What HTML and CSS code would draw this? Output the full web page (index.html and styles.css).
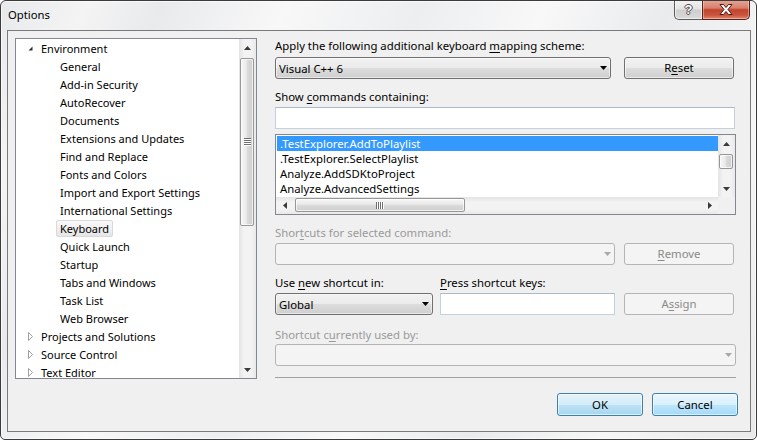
FILE: index.html
```html
<!DOCTYPE html>
<html>
  <head>
    <meta charset="utf-8" />
    <title>Options</title>
    <meta name="viewport" content="width=device-width, initial-scale=1.0" />
    <link rel="stylesheet" href="styles.css">
  </head>
  <body>
    <div class="window">
      <div class="titleBar">
        <span class="titleText">Options</span>
        <div class="captionButtons">
          <div class="helpButton">?</div>
          <div class="closeButton">
            <svg width="14" height="11" viewBox="0 0 14 11">
              <path d="M1 0.5 H4.5 L7 3.5 L9.5 0.5 H13 L9 5.5 L13 10.5 H9.5 L7 7.5 L4.5 10.5 H1 L5 5.5 Z" fill="#ffffff" stroke="#4a1a12" stroke-width="1" stroke-linejoin="round" />
            </svg>
          </div>
        </div>
      </div>
      <div class="client">
        <div class="mainRow">
          <div class="tree">
            <div class="treeItems">
              <div class="treeRow rootRow">
                <span class="expander"><svg width="5" height="5" viewBox="0 0 5 5"><path d="M4.5 0.5 V4.5 H0.5 Z" fill="#303030" /></svg></span>
                <span class="treeLabel">Environment</span>
              </div>
              <div class="treeRow"><span class="treeLabel">General</span></div>
              <div class="treeRow"><span class="treeLabel">Add-in Security</span></div>
              <div class="treeRow"><span class="treeLabel">AutoRecover</span></div>
              <div class="treeRow"><span class="treeLabel">Documents</span></div>
              <div class="treeRow"><span class="treeLabel">Extensions and Updates</span></div>
              <div class="treeRow"><span class="treeLabel">Find and Replace</span></div>
              <div class="treeRow"><span class="treeLabel">Fonts and Colors</span></div>
              <div class="treeRow"><span class="treeLabel">Import and Export Settings</span></div>
              <div class="treeRow"><span class="treeLabel">International Settings</span></div>
              <div class="treeRow"><span class="treeLabel selected">Keyboard</span></div>
              <div class="treeRow"><span class="treeLabel">Quick Launch</span></div>
              <div class="treeRow"><span class="treeLabel">Startup</span></div>
              <div class="treeRow"><span class="treeLabel">Tabs and Windows</span></div>
              <div class="treeRow"><span class="treeLabel">Task List</span></div>
              <div class="treeRow"><span class="treeLabel">Web Browser</span></div>
              <div class="treeRow rootRow">
                <span class="expander"><svg width="6" height="9" viewBox="0 0 6 9"><path d="M0.5 0.5 L4.5 4.5 L0.5 8.5 Z" fill="none" stroke="#a0a0a0" /></svg></span>
                <span class="treeLabel">Projects and Solutions</span>
              </div>
              <div class="treeRow rootRow">
                <span class="expander"><svg width="6" height="9" viewBox="0 0 6 9"><path d="M0.5 0.5 L4.5 4.5 L0.5 8.5 Z" fill="none" stroke="#a0a0a0" /></svg></span>
                <span class="treeLabel">Source Control</span>
              </div>
              <div class="treeRow rootRow">
                <span class="expander"><svg width="6" height="9" viewBox="0 0 6 9"><path d="M0.5 0.5 L4.5 4.5 L0.5 8.5 Z" fill="none" stroke="#a0a0a0" /></svg></span>
                <span class="treeLabel">Text Editor</span>
              </div>
            </div>
            <div class="vScroll">
              <div class="scrollArrow"><svg width="7" height="4" viewBox="0 0 7 4"><path d="M0 4 L3.5 0 L7 4 Z" fill="#3a3a3a" /></svg></div>
              <div class="scrollTrack">
                <div class="vThumb treeThumb"><div class="vGrip"></div></div>
              </div>
              <div class="scrollArrow"><svg width="7" height="4" viewBox="0 0 7 4"><path d="M0 0 L7 0 L3.5 4 Z" fill="#3a3a3a" /></svg></div>
            </div>
          </div>

          <div class="rightPanel">
            <div class="label">Apply the following additional keyboard <u>m</u>apping scheme:</div>
            <div class="controlRow firstRow">
              <div class="combo schemeCombo">
                <span>Visual C++ 6</span>
                <svg width="7" height="4" viewBox="0 0 7 4"><path d="M0 0 L7 0 L3.5 4 Z" fill="#000" /></svg>
              </div>
              <div class="button">R<u>e</u>set</div>
            </div>

            <div class="label gapLabel">Show <u>c</u>ommands containing:</div>
            <div class="textBox wideBox"></div>

            <div class="listBox">
              <div class="listMain">
                <div class="listRows">
                  <div class="listRow active">.TestExplorer.AddToPlaylist</div>
                  <div class="listRow">.TestExplorer.SelectPlaylist</div>
                  <div class="listRow">Analyze.AddSDKtoProject</div>
                  <div class="listRow">Analyze.AdvancedSettings</div>
                </div>
                <div class="vScroll listScroll">
                  <div class="scrollArrow"><svg width="7" height="4" viewBox="0 0 7 4"><path d="M0 4 L3.5 0 L7 4 Z" fill="#3a3a3a" /></svg></div>
                  <div class="scrollTrack">
                    <div class="vThumb listThumb"></div>
                  </div>
                  <div class="scrollArrow"><svg width="7" height="4" viewBox="0 0 7 4"><path d="M0 0 L7 0 L3.5 4 Z" fill="#3a3a3a" /></svg></div>
                </div>
              </div>
              <div class="listBottom">
                <div class="hScroll">
                  <div class="scrollArrow"><svg width="4" height="7" viewBox="0 0 4 7"><path d="M4 0 L0 3.5 L4 7 Z" fill="#3a3a3a" /></svg></div>
                  <div class="scrollTrack">
                    <div class="hThumb"><div class="hGrip"></div></div>
                  </div>
                  <div class="scrollArrow"><svg width="4" height="7" viewBox="0 0 4 7"><path d="M0 0 L4 3.5 L0 7 Z" fill="#3a3a3a" /></svg></div>
                </div>
                <div class="scrollCorner"></div>
              </div>
            </div>

            <div class="label gapLabel disabledText">Shor<u>t</u>cuts for selected command:</div>
            <div class="controlRow">
              <div class="combo disabledCombo shortcutsCombo">
                <span></span>
                <svg width="7" height="4" viewBox="0 0 7 4"><path d="M0 0 L7 0 L3.5 4 Z" fill="#a8a8a8" /></svg>
              </div>
              <div class="button disabledButton"><u>R</u>emove</div>
            </div>

            <div class="labelRow">
              <div class="label scopeLabel">Use <u>n</u>ew shortcut in:</div>
              <div class="label"><u>P</u>ress shortcut keys:</div>
            </div>
            <div class="controlRow">
              <div class="combo scopeCombo">
                <span>Global</span>
                <svg width="7" height="4" viewBox="0 0 7 4"><path d="M0 0 L7 0 L3.5 4 Z" fill="#000" /></svg>
              </div>
              <div class="textBox keysBox"></div>
              <div class="button disabledButton">A<u>s</u>sign</div>
            </div>

            <div class="label usedLabel disabledText">Shortcut c<u>u</u>rrently used by:</div>
            <div class="combo disabledCombo usedCombo">
              <span></span>
              <svg width="7" height="4" viewBox="0 0 7 4"><path d="M0 0 L7 0 L3.5 4 Z" fill="#a8a8a8" /></svg>
            </div>

            <div class="separator"></div>
          </div>
        </div>

        <div class="footer">
          <div class="dlgButton defaultButton">OK</div>
          <div class="dlgButton hotButton">Cancel</div>
        </div>
      </div>
    </div>
  </body>
</html>
```

FILE: styles.css
```css
body {
  margin: 0;
  font-family: "Noto Sans", "Open Sans", sans-serif;
  font-size: 11px;
  color: #000;
  background: #ffffff;
}
u {
  text-decoration: underline;
  text-underline-offset: 2px;
}

/* window frame */
.window {
  box-sizing: border-box;
  width: 757px;
  height: 440px;
  border: 1px solid #3b3b3b;
  border-radius: 6px 6px 5px 5px;
  padding: 0 5px 7px 6px;
  overflow: hidden;
  box-shadow: inset 0 0 0 1px rgba(255, 255, 255, 0.7);
  background: linear-gradient(
    115deg,
    #e7e9eb 0%,
    #f4f4f4 9%,
    #e8eaec 17%,
    #f8f8f8 30%,
    #eceef0 44%,
    #f8f8f8 57%,
    #e9ebed 70%,
    #f6f6f6 84%,
    #e9e9e9 100%
  );
}
.titleBar {
  height: 29px;
  display: flex;
  justify-content: space-between;
  align-items: flex-start;
}
.titleText {
  margin-top: 6px;
  padding-left: 1px;
  line-height: 15px;
  font-size: 11.3px;
}
.captionButtons {
  display: flex;
  margin-top: -1px;
  margin-right: 1px;
}
.helpButton {
  box-sizing: border-box;
  width: 28px;
  height: 20px;
  border: 1px solid #5c5c5c;
  border-top: none;
  border-right: none;
  border-radius: 0 0 0 5px;
  background: linear-gradient(#f4f4f4, #e4e4e4 45%, #cfcfcf 55%, #dadada);
  box-shadow: inset 0 0 0 1px rgba(255, 255, 255, 0.6);
  text-align: center;
  font-family: "Liberation Sans", sans-serif;
  font-weight: bold;
  font-size: 13px;
  line-height: 19px;
  color: #ffffff;
  text-shadow: 1px 0 0 #4b4b4b, -1px 0 0 #4b4b4b, 0 1px 0 #4b4b4b, 0 -1px 0 #4b4b4b;
}
.closeButton {
  box-sizing: border-box;
  width: 48px;
  height: 20px;
  border: 1px solid #5a2219;
  border-top: none;
  border-radius: 0 0 5px 0;
  background: linear-gradient(#e7a696, #d7806c 42%, #c2432e 52%, #cb553f 80%, #df8a73);
  box-shadow: inset 0 0 0 1px rgba(255, 255, 255, 0.35);
  display: flex;
  align-items: center;
  justify-content: center;
}

/* client area */
.client {
  box-sizing: border-box;
  height: 402px;
  border: 1px solid #7a7a7a;
  background: #f0f0f0;
  padding: 7px 0 0 7px;
}
.mainRow {
  display: flex;
}

/* tree */
.tree {
  box-sizing: border-box;
  width: 242px;
  height: 341px;
  border: 1px solid #828790;
  background: #ffffff;
  display: flex;
}
.treeItems {
  flex: 1;
  overflow: hidden;
}
.treeRow {
  height: 18px;
  display: flex;
  align-items: flex-start;
  padding: 1px 0 0 40px;
  box-sizing: border-box;
  white-space: nowrap;
}
.rootRow {
  padding-left: 12px;
}
.expander {
  width: 9px;
  height: 17px;
  display: flex;
  align-items: center;
}
.treeLabel {
  display: block;
  line-height: 15px;
  padding: 0 3px;
  border: 1px solid transparent;
  border-radius: 2px;
}
.treeLabel.selected {
  border-color: #d9d9d9;
  background: linear-gradient(#f9f9f9, #e6e6e6);
}

/* scrollbars */
.vScroll {
  width: 17px;
  display: flex;
  flex-direction: column;
  background: linear-gradient(to right, #e4e4e4, #f3f3f3 30%, #f3f3f3 70%, #e9e9e9);
}
.scrollArrow {
  width: 17px;
  height: 17px;
  display: flex;
  align-items: center;
  justify-content: center;
  flex-shrink: 0;
}
.scrollTrack {
  flex: 1;
}
.vThumb {
  box-sizing: border-box;
  margin: 2px 2px 0 1px;
  border: 1px solid #979797;
  border-radius: 2px;
  background: linear-gradient(to right, #f7f7f7, #e9e9e9 45%, #d9d9d9 55%, #cfcfcf);
  box-shadow: inset 0 0 0 1px rgba(255, 255, 255, 0.7);
  display: flex;
  align-items: center;
  justify-content: center;
}
.treeThumb {
  height: 168px;
}
.vGrip {
  width: 7px;
  height: 8px;
  background: repeating-linear-gradient(#6f6f6f 0 1px, #ffffff 1px 2px);
}
.listThumb {
  height: 15px;
}

/* right panel */
.rightPanel {
  width: 461px;
  margin-left: 18px;
  display: flex;
  flex-direction: column;
  font-size: 11.35px;
}
.label {
  line-height: 15px;
  white-space: nowrap;
}
.disabledText {
  color: #9a9a9a;
}
.gapLabel {
  margin-top: 10px;
}
.controlRow {
  display: flex;
  margin-top: 3px;
}
.firstRow {
  margin-top: 4px;
}
.combo {
  box-sizing: border-box;
  height: 22px;
  border: 1px solid #707070;
  border-radius: 3px;
  background: linear-gradient(#f2f2f2, #ebebeb 50%, #dddddd 50%, #cfcfcf);
  box-shadow: inset 0 0 0 1px rgba(255, 255, 255, 0.5);
  display: flex;
  align-items: center;
  justify-content: space-between;
  padding: 0 3px;
  line-height: 15px;
}
.schemeCombo {
  width: 336px;
  margin-right: 13px;
}
.shortcutsCombo {
  width: 340px;
  margin-right: 9px;
}
.scopeCombo {
  width: 158px;
  margin-right: 7px;
}
.usedCombo {
  width: 461px;
  margin-top: 2px;
}
.disabledCombo {
  border-color: #b4b4b4;
  background: #f4f4f4;
  box-shadow: none;
}
.button {
  box-sizing: border-box;
  width: 110px;
  height: 22px;
  border: 1px solid #707070;
  border-radius: 3px;
  background: linear-gradient(#f2f2f2, #ebebeb 50%, #dddddd 50%, #cfcfcf);
  box-shadow: inset 0 0 0 1px rgba(255, 255, 255, 0.6);
  text-align: center;
  line-height: 20px;
}
.disabledButton {
  border-color: #b4b4b4;
  background: #f4f4f4;
  box-shadow: none;
  color: #8a8a8a;
}
.textBox {
  box-sizing: border-box;
  height: 22px;
  border: 1px solid #c3d0dd;
  border-top-color: #abb9c8;
  background: #ffffff;
}
.wideBox {
  width: 460px;
  margin-top: 3px;
}
.keysBox {
  width: 175px;
  margin-right: 9px;
}
.labelRow {
  display: flex;
  margin-top: 10px;
}
.scopeLabel {
  width: 165px;
}
.usedLabel {
  margin-top: 12px;
}
.separator {
  margin-top: 11px;
  height: 1px;
  background: #a0a0a0;
}

/* command list */
.listBox {
  box-sizing: border-box;
  width: 461px;
  height: 81px;
  margin-top: 5px;
  border: 1px solid #828790;
  background: #ffffff;
  display: flex;
  flex-direction: column;
}
.listMain {
  height: 62px;
  display: flex;
}
.listRows {
  flex: 1;
  padding: 1px 0 0 1px;
}
.listRow {
  height: 15px;
  line-height: 15px;
  padding-left: 3px;
  white-space: nowrap;
}
.listRow.active {
  background: #3399ff;
  color: #ffffff;
}
.listBottom {
  height: 17px;
  display: flex;
}
.hScroll {
  flex: 1;
  display: flex;
  background: linear-gradient(#e4e4e4, #f3f3f3 30%, #f3f3f3 70%, #e9e9e9);
}
.hThumb {
  box-sizing: border-box;
  width: 170px;
  height: 14px;
  margin: 1px 0 0 2px;
  border: 1px solid #979797;
  border-radius: 2px;
  background: linear-gradient(#f7f7f7, #e9e9e9 45%, #d9d9d9 55%, #cfcfcf);
  box-shadow: inset 0 0 0 1px rgba(255, 255, 255, 0.7);
  display: flex;
  align-items: center;
  justify-content: center;
}
.hGrip {
  width: 8px;
  height: 7px;
  background: repeating-linear-gradient(to right, #6f6f6f 0 1px, #ffffff 1px 2px);
}
.scrollCorner {
  width: 17px;
  background: #f0f0f0;
}

/* dialog buttons */
.footer {
  display: flex;
  justify-content: flex-end;
  gap: 9px;
  margin-top: 14px;
  padding-right: 12px;
  font-size: 11.35px;
}
.dlgButton {
  box-sizing: border-box;
  width: 86px;
  height: 23px;
  border: 1px solid #3c7fb1;
  border-radius: 3px;
  text-align: center;
  line-height: 21px;
  box-shadow: inset 0 0 0 1px rgba(255, 255, 255, 0.6);
}
.defaultButton {
  background: linear-gradient(#e5f3fb, #d3ecf9 50%, #bde2f6 50%, #a9d6ee);
}
.hotButton {
  background: linear-gradient(#eaf6fd, #d9f0fc 50%, #bee6fd 50%, #a7d9f5);
}
```
